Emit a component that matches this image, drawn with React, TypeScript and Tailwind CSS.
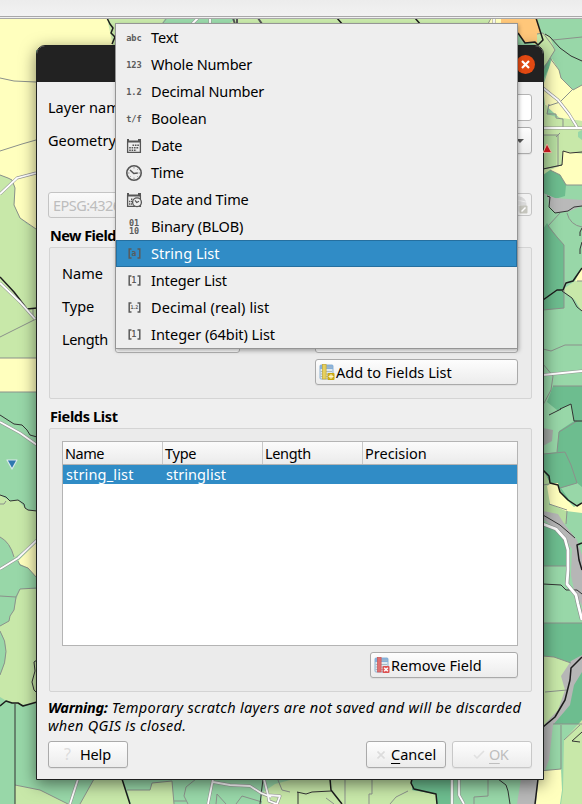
import React from 'react';

type Pt = { d: string; f: string };

const YEL = '#ffffbe';
const LIGHT = '#c8e8a9';
const MID = '#98d7a8';
const DARK = '#6dbd8f';

const areas: Pt[] = [
  // left edge
  { d: 'M0 18H107L113 28L111 33L115 40V50H36V230L20 218L14 205L15 188L12 180L0 175Z', f: YEL },
  { d: 'M0 175L8 178L12 180L15 188L14 205L20 218L27 224L36 229V358H0Z', f: LIGHT },
  { d: 'M0 358H37V392H0Z', f: YEL },
  { d: 'M0 495L10 501L18 500L24 507L28 510L37 511V541L14 558Q12 544 0 537Z', f: LIGHT },
  { d: 'M18 561L37 542V578L28 568L20 564Z', f: YEL },
  { d: 'M20 589H37V703L20 705L5 700L0 697V675Q12 650 0 631V626L9 621L10 616L14 610L16 600Z', f: LIGHT },
  // bottom edge
  { d: 'M15 785L40 790L68 804H15Z', f: LIGHT },
  { d: 'M94 779H122L130 804H80Z', f: LIGHT },
  { d: 'M127 790H150L152 783L172 781L174 804H131Z', f: LIGHT },
  { d: 'M262 793L275 784L290 780H331L333 790L342 804H262Z', f: LIGHT },
  { d: 'M331 779H412V790L436 794L437 804H342L333 790Z', f: LIGHT },
  { d: 'M412 779H450V804H437L436 794L412 790Z', f: DARK },
  { d: 'M521 779H541L538 804H517Z', f: '#b8b8b8' },
  // top strip
  { d: 'M107 18H501V46H113Z', f: LIGHT },
  { d: 'M165 18H238L228 24H162Z', f: MID },
  { d: 'M490 18H501V24H488Z', f: YEL },
  { d: 'M501 18H537L543 40L538 45L530 42L524 43L518 33V24H501Z', f: '#ffc77a' },
  // right edge
  { d: 'M537 34L543 33L550 37L555 50L550 58L544 70V82H537Z', f: LIGHT },
  { d: 'M543 67L551 58L549 68L543 80Z', f: DARK },
  { d: 'M543 86L552 59L559 70L561 78L573 90L582 85V121L562 120L545 105Z', f: YEL },
  { d: 'M543 104L548 106L547 114L556 117L582 121V185H543Z', f: LIGHT },
  { d: 'M543 135H557L556 166L543 169Z', f: '#b6dda0' },
  { d: 'M578 132L582 130V140L578 137Z', f: MID },
  { d: 'M563 151L582 154V185H567L560 174L550 170L562 165Z', f: YEL },
  { d: 'M543 175L550 170L560 175L566 185L565 196L555 199L543 193Z', f: DARK },
  { d: 'M543 193L555 198L582 200V206L570 211L556 213L549 206L548 197Z', f: '#b9b9b9' },
  { d: 'M547 223L557 237L564 245V308L543 310V229Z', f: DARK },
  { d: 'M582 267V281H575Z', f: YEL },
  { d: 'M562 290L575 281H582V312L575 300Z', f: LIGHT },
  { d: 'M553 386H582V504L574 507L562 493L558 485L550 483L543 470V445L556 430L557 410L547 402Z', f: DARK },
  { d: 'M549 415L571 404L574 421L559 431L557 452L543 454V415Z', f: MID },
  { d: 'M543 428L553 430L552 441L543 446Z', f: '#a5aaa6' },
  { d: 'M561 488L577 483L582 487V505L574 507Z', f: MID },
  { d: 'M543 470L550 483L549 504L567 510L566 524L543 518Z', f: '#b6dda0' },
  { d: 'M547 486L552 483H558L560 492L565 498L574 507L582 503V513L566 511L550 504Z', f: YEL },
  { d: 'M543 511L558 514L565 525L577 540L582 555V606L574 590L571 575L572 549L563 535L543 519Z', f: '#b6b6b6' },
  { d: 'M543 524L559 530L568 545L570 566H543Z', f: DARK },
  { d: 'M543 623H582V657L571 668L553 657H543Z', f: DARK },
  { d: 'M543 656L554 657L571 663L568 680L562 705L548 725H543Z', f: LIGHT },
  { d: 'M568 690L582 668V724H553L566 703Z', f: DARK },
  { d: 'M582 655L571 661L561 676L565 690L558 710L543 726V775L549 760L553 725L570 705L574 685L582 672Z', f: '#b6b6b6' },
  { d: 'M564 740L582 720V804H561L563 790Z', f: LIGHT },
  { d: 'M539 771L561 769L562 790L560 804H536Z', f: YEL },
];

const grayLines = [
  'M0 78L14 81L36 82M0 151L22 144L36 140M0 175L8 178L12 180L15 188L14 205L20 218L36 229',
  'M0 337L36 319M33 309V318M0 358H36M0 392H36',
  'M0 537Q10 542 14 557M18 561L20 565L28 568L37 578M0 596L16 597L20 589L37 588M16 597L14 610L10 616L9 621L0 626M0 631Q12 650 0 675M0 504H4L6 501',
  'M15 785L40 790L68 804M94 779L80 804M127 790H150L152 783L172 781L174 804M196 779L186 787L184 796L188 804M174 801H186M216 804L217 794L226 804M236 804L242 796L262 802M278 780L282 790L290 792',
  'M345 779V804M372 779V794H369V804M390 804L396 797L408 791M474 804V797L488 796V779M326 798L334 804',
  'M162 24L167 18M488 24L491 18M553 40L582 37M537 34L543 33L552 45L555 50L550 58L543 70M550 58L559 70L561 78L573 90L582 85M549 104L547 114L556 114L556 118L563 119V129M572 90L560 102L548 106M543 135H558V166M560 133L556 137',
  'M550 170L560 175L566 185H582M543 169L562 165M560 213L548 226L557 237L564 245V308L543 310M567 213Q570 225 582 227M577 281H582',
  'M543 349L551 351L565 345H582M553 386H582M543 364L553 376L551 390L543 405M577 421L559 432L557 452M543 454L565 452L571 465L577 483L560 488M567 511L566 524M549 504L567 510M543 566H570M543 623H582M543 656L554 657L571 663M545 692L567 690M553 724H582M539 771L561 769V725M564 740L580 725M543 485L549 484',
];

const blackLines = [
  'M0 415L14 424L22 425L27 430L30 435L37 437M0 495L6 497L10 501L18 500L24 504L25 508L28 510L37 511M37 660L34 662L35 671L32 682L34 690L37 693',
  'M15 704V804M263 779L260 804M297 792L306 794L312 792L331 791M298 792V804M498 779L506 785L508 791L510 804',
  'M545 34L550 37L560 48L571 56L582 61M562 165L563 151L570 153L582 152M543 169L562 165M547 196L550 197L549 207L555 213L568 211L574 207L582 206',
  'M562 291L572 298L577 307L582 311M560 409L571 404L574 421L582 421M549 415L561 409M543 515L560 525L575 538M543 584L561 585L566 590L577 590L582 594M582 732L572 741L580 742',
  'M582 228L580 232V236M582 242L580 249V254',
];

const heavyLines = [
  'M107 18L110 24L113 28L111 33L115 37L112 44M337 18L343 25M415 18L421 25M536 18L543 40L538 45L535 42L525 43L518 33',
  'M0 277L14 292L27 309L37 308M0 706L6 701L12 703L18 703L23 706L37 702',
  'M122 779L130 804M330 779L331 790L342 804M412 779L411 783L414 789L436 794L437 804M538 779L535 804',
  'M543 300L557 290L563 290L566 283L573 281L582 268M543 470L549 476L550 483L558 485L560 492L568 500L577 506L582 503M582 543L577 545L579 560L582 570M582 657L571 668L570 680L565 700L555 717L543 727',
];

const roads = [
  'M0 194L17 178L36 173M0 283L20 302L35 319M0 422L20 433L37 445M0 569L18 558L37 540',
  'M78 779L70 804M213 779L208 804M213 782L230 785L250 786L261 793L271 797M264 779L268 795L280 796L277 804L269 801L268 795M452 779V804M459 779L459 795L464 804',
  'M192 24L198 18M210 18V24M494 24V18M543 88L558 100L569 114L577 127M543 128L582 128M543 375L582 371',
];

function MapCanvas() {
  return (
    <svg className="absolute inset-0" width="582" height="804" viewBox="0 0 582 804" fill="none" strokeLinejoin="round">
      <rect width="582" height="804" fill={MID} />
      {areas.map((a, i) => <path key={i} d={a.d} fill={a.f} />)}
      {grayLines.map((d, i) => <path key={i} d={d} stroke="#8b918b" strokeWidth="1" />)}
      {blackLines.map((d, i) => <path key={i} d={d} stroke="#333" strokeWidth="1" />)}
      {heavyLines.map((d, i) => <path key={i} d={d} stroke="#1c1c1c" strokeWidth="1.5" />)}
      {roads.map((d, i) => <path key={i} d={d} stroke="#969696" strokeWidth="3" />)}
      {roads.map((d, i) => <path key={i} d={d} stroke="#fff" strokeWidth="1.8" />)}
      <path d="M543 524L556 529L565 539L568 550L568 570L567 584L576 595L578 604L582 620" stroke="#8c8c8c" strokeWidth="4" />
      <path d="M543 524L556 529L565 539L568 550L568 570L567 584L576 595L578 604L582 620" stroke="#fff" strokeWidth="2.8" />
      <path d="M233 18L235 24M237 18V24M258 18L262 24" stroke="#555" strokeWidth="2" />
      <path d="M7 460H17L12 469Z" fill="#2f78b0" stroke="#d8e8ea" strokeWidth="1.2" />
    </svg>
  );
}

function TypeIcon({ kind }: { kind: string }) {
  const mono = 'w-[18px] text-center font-["DejaVu_Sans_Mono",monospace] font-bold text-[#5b5b5b]';
  if (kind === 'date' || kind === 'datetime') {
    return (
      <svg width="18" height="18" viewBox="0 0 18 18" fill="none">
        <path d="M2 2H4V3.5H13V2H16V5.500H2Z" fill="#555" />
        <path d="M2.600 4V15.400H15.400V4" stroke="#555" strokeWidth="1.300" />
        {kind === 'date' ? (
          <path d="M7.500 8.200H14M4.200 10.700H14M4.200 13.200H11.500" stroke="#555" strokeWidth="1.500" strokeDasharray="1.6 .8" />
        ) : (
          <>
            <path d="M4 10.500H7M4 13H7M6 8.300H8" stroke="#555" strokeWidth="1.500" strokeDasharray="1.3 .6" />
            <circle cx="12" cy="11.300" r="4.400" fill="#eee" stroke="#555" strokeWidth="1.300" />
            <path d="M10 9.300L11.800 11.500L14 10.300" stroke="#555" strokeWidth="1.200" />
          </>
        )}
      </svg>
    );
  }
  if (kind === 'time') {
    return (
      <svg width="18" height="18" viewBox="0 0 18 18" fill="none">
        <circle cx="9" cy="9" r="7.200" stroke="#555" strokeWidth="1.600" />
        <path d="M5 6L8.800 9.500L12.800 9" stroke="#555" strokeWidth="1.500" />
        <path d="M9 3.200V4.400M9 13.600V14.800M3.200 9H4.400M13.600 9H14.800M13 5L12.400 5.600M5 13L5.600 12.400M13 13L12.400 12.400" stroke="#777" strokeWidth=".9" />
      </svg>
    );
  }
  if (kind === '01') {
    return (
      <span className={`${mono} flex flex-col items-center text-[8.500px]`}>
        <span className="block h-[8px] leading-[8px]">01</span>
        <span className="block h-[8px] leading-[8px]">10</span>
      </span>
    );
  }
  if (kind[0] === '[') {
    return (
      <span className={`${mono} flex items-center justify-center`}>
        <svg width="13" height="11" viewBox="0 0 13 11" fill="none" stroke="#5b5b5b" strokeWidth="1.500">
          <path d="M3.500 1H1.200V10H3.500M9.500 1H11.800V10H9.500" />
        </svg>
        <span className={kind === '[1.2]' ? 'absolute text-[5px] leading-none tracking-[-0.6px]' : 'absolute text-[8px] leading-none'}>
          {kind.slice(1, -1)}
        </span>
      </span>
    );
  }
  return <span className={`${mono} pt-[1px] text-[8.700px] leading-none`}>{kind}</span>;
}

const types = [
  { icon: 'abc', name: 'Text', track: 'tracking-[-0.1px]' },
  { icon: '123', name: 'Whole Number', track: 'tracking-[-0.2px]' },
  { icon: '1.2', name: 'Decimal Number', track: 'tracking-[-0.15px]' },
  { icon: 't/f', name: 'Boolean', track: 'tracking-[-0.05px]' },
  { icon: 'date', name: 'Date', track: 'tracking-[-0.2px]' },
  { icon: 'time', name: 'Time', track: 'tracking-[-0.2px]' },
  { icon: 'datetime', name: 'Date and Time', track: 'tracking-[-0.12px]' },
  { icon: '01', name: 'Binary (BLOB)', track: 'tracking-[-0.1px]' },
  { icon: '[a]', name: 'String List', track: 'tracking-[0.05px]' },
  { icon: '[1]', name: 'Integer List', track: 'tracking-[-0.15px]' },
  { icon: '[1.2]', name: 'Decimal (real) list', track: 'tracking-[0.1px]' },
  { icon: '[1]', name: 'Integer (64bit) List', track: 'tracking-[-0.03px]' },
];

function TypeMenu() {
  return (
    <div className="absolute left-[115px] top-[23px] w-[403px] border border-[#959595] bg-[#eeeeee] shadow-[1px_2px_4px_rgba(0,0,0,0.3)]">
      {types.map((t) => (
        <div
          key={t.name}
          className={
            t.name === 'String List'
              ? 'relative flex h-[27px] items-center border border-[#256f9f] bg-[#308cc6] pl-[8px] text-white'
              : 'relative flex h-[27px] items-center pl-[9px]'
          }
        >
          <TypeIcon kind={t.icon} />
          <span className={`ml-[8px] whitespace-nowrap pb-[2px] ${t.track}`}>{t.name}</span>
        </div>
      ))}
    </div>
  );
}

function TableIcon({ remove }: { remove?: boolean }) {
  return (
    <svg width="16" height="16" viewBox="0 0 16 16">
      <rect x="1" y="1" width="13" height="14" rx="1" fill="#dfe9ef" stroke="#8fb2d0" />
      <rect x="1" y="1" width="13" height="4" fill="#86b0da" />
      <path d="M3 3.200H13M7 7.500H13M7 10H13M7 12.500H13" stroke="#a8b9c4" />
      <path d="M1.500 7.500H4M1.500 10H4M1.500 12.500H4" stroke="#a8b9c4" />
      <rect x="3.500" y=".5" width="3.600" height="14.500" fill={remove ? '#df7070' : '#e5d060'} stroke={remove ? '#cc5555' : '#c8aa30'} strokeWidth=".7" />
      <rect x="8.500" y="9" width="7" height="7" rx="1" fill={remove ? '#dc5050' : '#c9a70c'} />
      {remove ? (
        <path d="M10.200 10.700L13.800 14.300M13.800 10.700L10.200 14.300" stroke="#fff" strokeWidth="1.500" />
      ) : (
        <path d="M12 10V15M9.500 12.500H14.500M10.300 10.800L13.700 14.200M13.700 10.800L10.300 14.200" stroke="#fff6c8" strokeWidth="1" />
      )}
    </svg>
  );
}

const button = 'flex items-center rounded-[3px] border border-[#aaaaaa] bg-gradient-to-b from-[#fdfdfd] to-[#ececec] shadow-[0_1px_1px_rgba(0,0,0,0.06)]';

function Dialog() {
  return (
    <div className="absolute left-[36px] top-[45px] flex h-[735px] w-[508px] flex-col overflow-visible rounded-t-[9px] border border-[#1f2120] bg-[#efefef] shadow-[0_4px_16px_rgba(0,0,0,0.5)]">
      <div className="flex h-[36px] shrink-0 items-center justify-end rounded-t-[8px] bg-[#222222] pr-[8px]">
        <div className="flex size-[19px] items-center justify-center rounded-full bg-[#e24912]">
          <svg width="9" height="9" viewBox="0 0 9 9"><path d="M1 1L8 8M8 1L1 8" stroke="#fff" strokeWidth="2.200" /></svg>
        </div>
      </div>
      <div className="flex flex-col px-[11px] pt-[12px]">
        <div className="flex h-[27px] items-center">
          <span className="w-[90px] whitespace-nowrap pb-[2px]">Layer name</span>
          <div className="h-[27px] flex-1 rounded-[3px] border border-[#b4b4b4] bg-white" />
        </div>
        <div className="mt-[6px] flex h-[27px] items-center">
          <span className="w-[110px] whitespace-nowrap pb-[2px]">Geometry type</span>
          <div className={`${button} h-[27px] flex-1 justify-end pr-[7px]`}>
            <svg width="8" height="4" viewBox="0 0 8 4"><path d="M0 0H8L4 4Z" fill="#555" /></svg>
          </div>
        </div>
        <div className="mt-[38px] flex h-[26px] gap-[6px]">
          <div className="flex flex-1 items-center rounded-[3px] border border-[#c4c4c4] bg-gradient-to-b from-[#fafafa] to-[#ededed] pl-[4px] tracking-[-0.55px] text-[#bdbdbd]">EPSG:4326</div>
          <div className="mt-[1px] flex h-[23px] w-[26px] items-center justify-center rounded-[3px] border border-[#c4c4c4] bg-[#f2f2f2]">
            <svg width="18" height="18" viewBox="0 0 18 18">
              <circle cx="9" cy="8" r="7.500" fill="#d9d9d9" />
              <path d="M2 6Q9 3 16 6M2 11Q9 8 16 11M9 1V16" stroke="#eee" fill="none" />
              <rect x="9.500" y="9.500" width="8" height="8" rx="1" fill="#c5c5bd" />
              <path d="M11.500 15.500L15.500 11.500" stroke="#fff" strokeWidth="1.500" />
            </svg>
          </div>
        </div>
        <div className="mt-[7px] flex h-[22px] items-center pb-[2px] pl-[2px] font-bold tracking-[-0.55px]">New Field</div>
        <div className="ml-[1px] flex h-[152px] flex-col rounded-[2px] border border-[#d4d4d4] bg-[#ebebeb] pl-[12px] pr-[13px] pt-[12px]">
          <div className="flex h-[27px] items-center pb-[2px]">Name</div>
          <div className="mt-[6px] flex h-[27px] items-center pb-[2px]">Type</div>
          <div className="mt-[6px] flex h-[27px] items-center">
            <span className="w-[53px] pb-[2px] tracking-[-0.35px]">Length</span>
            <div className="h-[27px] w-[125px] rounded-[3px] border border-[#b4b4b4] bg-white" />
            <div className="ml-auto h-[27px] w-[203px] rounded-[3px] border border-[#b4b4b4] bg-white" />
          </div>
          <div className={`${button} mt-[6px] ml-auto h-[26px] w-[203px] pl-[3px]`}>
            <TableIcon />
            <span className="ml-[1px] whitespace-nowrap pb-[1px] tracking-[0.05px]">Add to Fields List</span>
          </div>
        </div>
        <div className="mt-[7px] flex h-[22px] items-center pb-[2px] pl-[2px] font-bold tracking-[-0.35px]">Fields List</div>
        <div className="ml-[1px] flex h-[264px] flex-col rounded-[2px] border border-[#d4d4d4] bg-[#ebebeb] pl-[12px] pr-[13px] pt-[12px]">
          <div className="h-[205px] border border-[#b4b4b4] bg-white">
            <div className="flex h-[23px] border-b border-[#b4b4b4] bg-gradient-to-b from-[#fbfbfb] to-[#ebebeb] leading-[22px]">
              <div className="w-[100px] border-r border-[#c8c8c8] pl-[2px] tracking-[-0.5px]">Name</div>
              <div className="w-[100px] border-r border-[#c8c8c8] pl-[2px] tracking-[-0.25px]">Type</div>
              <div className="w-[100px] border-r border-[#c8c8c8] pl-[2px] tracking-[-0.35px]">Length</div>
              <div className="flex-1 pl-[2px]">Precision</div>
            </div>
            <div className="flex h-[19px] bg-[#308cc6] leading-[18px] text-white">
              <div className="w-[100px] pl-[3px] tracking-[0.15px]">string_list</div>
              <div className="pl-[3px] tracking-[0.05px]">stringlist</div>
            </div>
          </div>
          <div className={`${button} mt-[6px] ml-auto h-[26px] w-[148px] pl-[3px]`}>
            <TableIcon remove />
            <span className="ml-[1px] whitespace-nowrap pb-[1px]">Remove Field</span>
          </div>
        </div>
        <div className="mt-[6px] whitespace-nowrap italic leading-[18px] tracking-[0.3px]">
          <div><b className="tracking-[-0.3px]">Warning:</b> Temporary scratch layers are not saved and will be discarded</div>
          <div>when QGIS is closed.</div>
        </div>
        <div className="mt-[7px] flex h-[27px]">
          <div className={`${button} w-[80px] pl-[15px]`}>
            <span className="w-[16px] pb-[2px] text-[16px] text-[#dcdcdc]">?</span>
            <span className="pb-[2px] tracking-[-0.15px]">Help</span>
          </div>
          <div className={`${button} ml-auto w-[80px] pl-[10px]`}>
            <svg width="8" height="8" viewBox="0 0 8 8"><path d="M.5.5L7.500 7.500M7.500.5L.5 7.500" stroke="#dcdcdc" strokeWidth="1.600" /></svg>
            <span className="ml-[6px] pb-[2px]"><span className="underline underline-offset-[3px]">C</span>ancel</span>
          </div>
          <div className={`${button} ml-[6px] w-[80px] border-[#c8c8c8] pl-[20px] text-[#bebebe]`}>
            <svg width="12" height="9" viewBox="0 0 12 9"><path d="M1 5L4 8L11 1" fill="none" stroke="#e0e0e0" strokeWidth="1.600" /></svg>
            <span className="ml-[4px] pb-[2px] tracking-[-0.6px]"><span className="underline underline-offset-[3px]">O</span>K</span>
          </div>
        </div>
      </div>
    </div>
  );
}

export default function App() {
  return (
    <div className="relative h-[804px] w-[582px] overflow-hidden font-['Noto_Sans',sans-serif] text-[14.500px] leading-[20px] text-black">
      <MapCanvas />
      <div className="relative h-[19px] border-b border-[#a8a8a8] bg-[#f0f0f0]">
        <div className="h-[17px] border-b border-[#a8a8a8] bg-gradient-to-b from-[#ececec] to-[#f2f2f2]" />
      </div>
      <Dialog />
      <svg className="absolute left-[543px] top-[143px]" width="9" height="11" viewBox="0 0 9 11">
        <path d="M0 9.500L4 1L8.500 9.500Z" fill="#bd151c" stroke="#e8b9a8" strokeWidth=".8" />
      </svg>
      <TypeMenu />
    </div>
  );
}
